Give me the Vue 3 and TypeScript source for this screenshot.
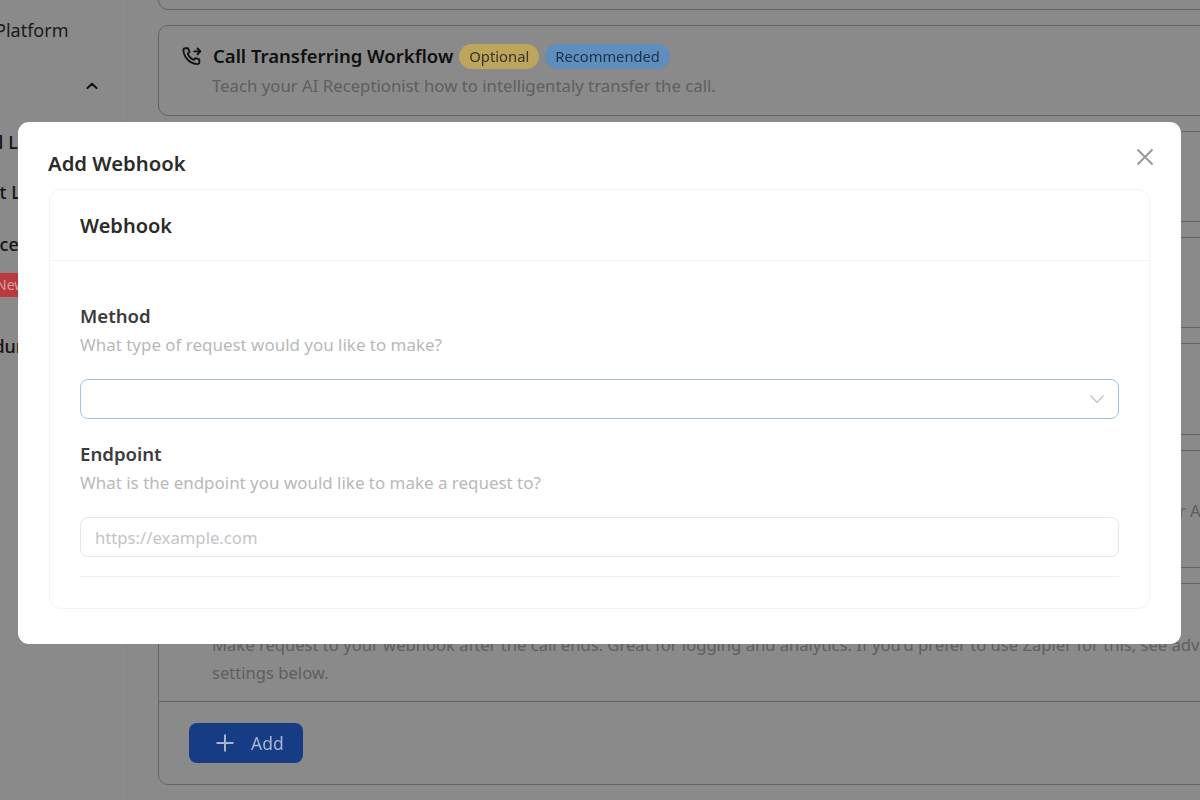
<script setup lang="ts">
const sideItems = [
  { label: 'Call Logs', cls: 'i-call' },
  { label: 'Text Logs', cls: 'i-text' },
  { label: 'Voice Library', cls: 'i-voice' },
]
</script>

<template>
  <div class="page">
    <aside class="sidebar">
      <div class="side-inner">
        <div class="side-item platform">Platform</div>
        <div class="chev-row">
          <svg width="14" height="14" viewBox="0 0 14 14" fill="none" stroke="#222" stroke-width="2" stroke-linecap="round" stroke-linejoin="round"><path d="M2.5 9 7 4.8 11.5 9" /></svg>
        </div>
        <div v-for="s in sideItems" :key="s.label" class="sub-item" :class="s.cls">{{ s.label }}</div>
        <div class="new-badge">New</div>
        <div class="sub-item i-dur">Procedures</div>
      </div>
    </aside>
    <main class="main">
      <section class="card c1"></section>
      <section class="card c2">
        <div class="card-title">
          <svg class="phone" width="22" height="22" viewBox="0 0 24 24" fill="none" stroke="#222" stroke-width="2" stroke-linecap="round" stroke-linejoin="round">
            <path d="M4.5 3.5h3.2l1.6 4.3-2 1.6a11.5 11.5 0 0 0 6.8 6.8l1.6-2 4.3 1.6v3.2a1.9 1.9 0 0 1-2 1.9A16.5 16.5 0 0 1 2.6 5.5a1.9 1.9 0 0 1 1.9-2Z" />
            <path d="M14.5 7h6.5M18 3.8 21.2 7 18 10.2" />
          </svg>
          <h3>Call Transferring Workflow</h3>
          <span class="pill optional">Optional</span>
          <span class="pill recommended">Recommended</span>
        </div>
        <p class="sub indent">Teach your AI Receptionist how to intelligentaly transfer the call.</p>
      </section>
      <section class="card c3"></section>
      <section class="card c4"></section>
      <section class="card c5"></section>
      <section class="card c6"><p class="side-note">for A</p></section>
      <section class="card c7">
        <div class="c7-body">
          <p class="sub narrow">Make request to your webhook after the call ends. Great for logging and analytics. If you'd prefer to use Zapier for this, see advanced<br />settings below.</p>
        </div>
        <div class="c7-foot">
          <button class="add-btn" type="button">
            <svg width="20" height="20" viewBox="0 0 20 20" fill="none" stroke="#a9b5cd" stroke-width="2"><path d="M10 1.5v17M1.5 10h17" /></svg>
            <span>Add</span>
          </button>
        </div>
      </section>
    </main>

    <div class="overlay">
      <div class="modal">
        <div class="modal-head">
          <h2>Add Webhook</h2>
          <button class="close" type="button" aria-label="Close">
            <svg width="20" height="20" viewBox="0 0 20 20" fill="none" stroke="#969696" stroke-width="1.8"><path d="M2.5 2.5l15 15M17.5 2.5l-15 15" /></svg>
          </button>
        </div>
        <div class="panel">
          <div class="panel-head">Webhook</div>
          <div class="panel-body">
            <label class="label">Method</label>
            <p class="hint">What type of request would you like to make?</p>
            <div class="select">
              <svg width="16" height="16" viewBox="0 0 16 16" fill="none" stroke="#c4c4c4" stroke-width="1.4"><path d="M1.5 4.5 8 11.5l6.5-7" /></svg>
            </div>
            <label class="label l2">Endpoint</label>
            <p class="hint">What is the endpoint you would like to make a request to?</p>
            <input class="input" type="text" placeholder="https://example.com" />
            <div class="rule"></div>
          </div>
        </div>
      </div>
    </div>
  </div>
</template>

<style>
html, body { margin: 0; padding: 0; overflow: hidden; }
</style>

<style scoped>
.page {
  width: 1200px;
  height: 800px;
  overflow: hidden;
  display: flex;
  background: #fff;
  font-family: "Noto Sans", "Open Sans", sans-serif;
  color: #1f1f1f;
}
.sidebar {
  width: 126px;
  height: 800px;
  flex: none;
  overflow: hidden;
  border-right: 1px solid #f2f2f2;
  box-sizing: content-box;
}
.side-inner {
  margin-left: -120px;
  width: 246px;
  padding-top: 17px;
}
.side-item.platform {
  font-size: 18px;
  line-height: 26px;
  padding-left: 115px;
  color: #333;
}
.chev-row {
  display: flex;
  justify-content: flex-end;
  margin-top: 36px;
  padding-right: 27px;
  height: 14px;
}
.sub-item {
  font-size: 18px;
  line-height: 26px;
  margin-top: 24px;
  color: #2a2a2a;
  font-weight: 500;
  white-space: nowrap;
}
.i-call { margin-top: 36px; padding-left: 92px; }
.i-text { padding-left: 91px; }
.i-voice { margin-top: 26px; padding-left: 93px; }
.i-dur { margin-top: 36px; padding-left: 65px; }
.new-badge {
  margin: 16px 0 0 100px;
  width: 60px;
  height: 24px;
  padding-left: 16px;
  box-sizing: border-box;
  background: #b83a3c;
  color: #d8a0a0;
  font-size: 14px;
  line-height: 24px;
  position: relative;
  z-index: 2;
}
.main {
  flex: none;
  width: 1200px;
  margin-left: 31px;
  display: flex;
  flex-direction: column;
  align-items: stretch;
  gap: 15px;
}
.card {
  border: 1px solid #b9b9b9;
  border-radius: 10px;
  box-sizing: border-box;
  flex: none;
}
.c1 { height: 25px; margin-top: -15px; }
.c2 { height: 91px; padding: 16px 22px; }
.c3 { height: 91px; }
.c4 { height: 91px; }
.c5 { height: 92px; }
.c6 { height: 118px; }
.c7 { height: 202px; display: flex; flex-direction: column; }
.card-title {
  display: flex;
  align-items: center;
  height: 28px;
}
.phone { margin-right: 10px; flex: none; }
.card-title h3 {
  margin: 0 6px 0 0;
  font-size: 18.5px;
  line-height: 28px;
  font-weight: 600;
  color: #1d1d1d;
}
.pill {
  position: relative;
  z-index: 2;
  height: 25px;
  line-height: 25px;
  border-radius: 13px;
  font-size: 14.8px;
  padding: 0 10px;
  margin-right: 6px;
}
.optional { background: #bda55e; color: #3a3522; }
.recommended { background: #5f8dbd; color: #1c3248; font-size: 14.7px; }
.sub {
  margin: 0;
  font-size: 16.76px;
  line-height: 28px;
  color: #b0b0b0;
}
.sub.narrow { font-size: 16.6px; }
.sub.indent { margin: 2px 0 0 31px; }
.side-note {
  margin: 46px 0 0 1004px;
  font-size: 16.7px;
  line-height: 28px;
  color: #b0b0b0;
}
.c7-body { height: 119px; padding: 47px 0 0 53px; box-sizing: border-box; border-bottom: 1px solid #b9b9b9; }
.c7-foot { padding: 21px 30px; }
.add-btn {
  position: relative;
  z-index: 2;
  width: 114px;
  height: 40px;
  border: 0;
  border-radius: 8px;
  background: #163c86;
  color: #a9b5cd;
  font: 400 17.5px/40px "Noto Sans", sans-serif;
  display: flex;
  align-items: center;
  padding: 0 0 0 26px;
  gap: 16px;
}
.overlay {
  position: fixed;
  inset: 0;
  z-index: 5;
}
.page::after {
  content: "";
  position: fixed;
  inset: 0;
  background: rgba(0, 0, 0, 0.46);
  z-index: 1;
}
.modal {
  position: absolute;
  left: 18px;
  top: 122px;
  width: 1163px;
  height: 522px;
  box-sizing: border-box;
  padding: 24px 31px 35px 31px;
  background: #fff;
  border-radius: 11px;
}
.modal-head {
  display: flex;
  justify-content: space-between;
  align-items: flex-start;
  height: 43px;
}
.modal-head h2 {
  margin: -1px 0 0 -1px;
  font-size: 20.3px;
  line-height: 36px;
  font-weight: 600;
  color: #2b2b2b;
}
.close {
  border: 0;
  background: none;
  padding: 0;
  width: 20px;
  height: 20px;
  margin: 1px -5px 0 0;
}
.panel {
  border: 1px solid #f4f4f4;
  border-radius: 12px;
  height: 420px;
  box-sizing: border-box;
}
.panel-head {
  height: 71px;
  padding-left: 30px;
  line-height: 72px;
  font-size: 20px;
  font-weight: 600;
  color: #2b2b2b;
  border-bottom: 1px solid #f4f4f4;
  box-sizing: border-box;
}
.panel-body { padding: 41px 30px 0 30px; }
.label {
  display: block;
  font-size: 18.6px;
  line-height: 28px;
  font-weight: 600;
  color: #3c3c3c;
}
.l2 { margin-top: 21px; }
.hint {
  margin: 0;
  font-size: 16.95px;
  line-height: 30px;
  color: #b8b8b8;
}
.select {
  margin-top: 19px;
  height: 40px;
  box-sizing: border-box;
  border: 1px solid #a9c0e4;
  border-radius: 8px;
  display: flex;
  align-items: center;
  justify-content: flex-end;
  padding-right: 13px;
}
.input {
  display: block;
  margin-top: 19px;
  width: 100%;
  height: 40px;
  box-sizing: border-box;
  border: 1px solid #e6e6e6;
  border-radius: 8px;
  padding: 0 14px;
  font: 400 16.7px "Noto Sans", sans-serif;
  outline: none;
}
.input::placeholder { color: #c4c4c4; }
.rule {
  margin-top: 19px;
  height: 1px;
  background: #efefef;
}
</style>
